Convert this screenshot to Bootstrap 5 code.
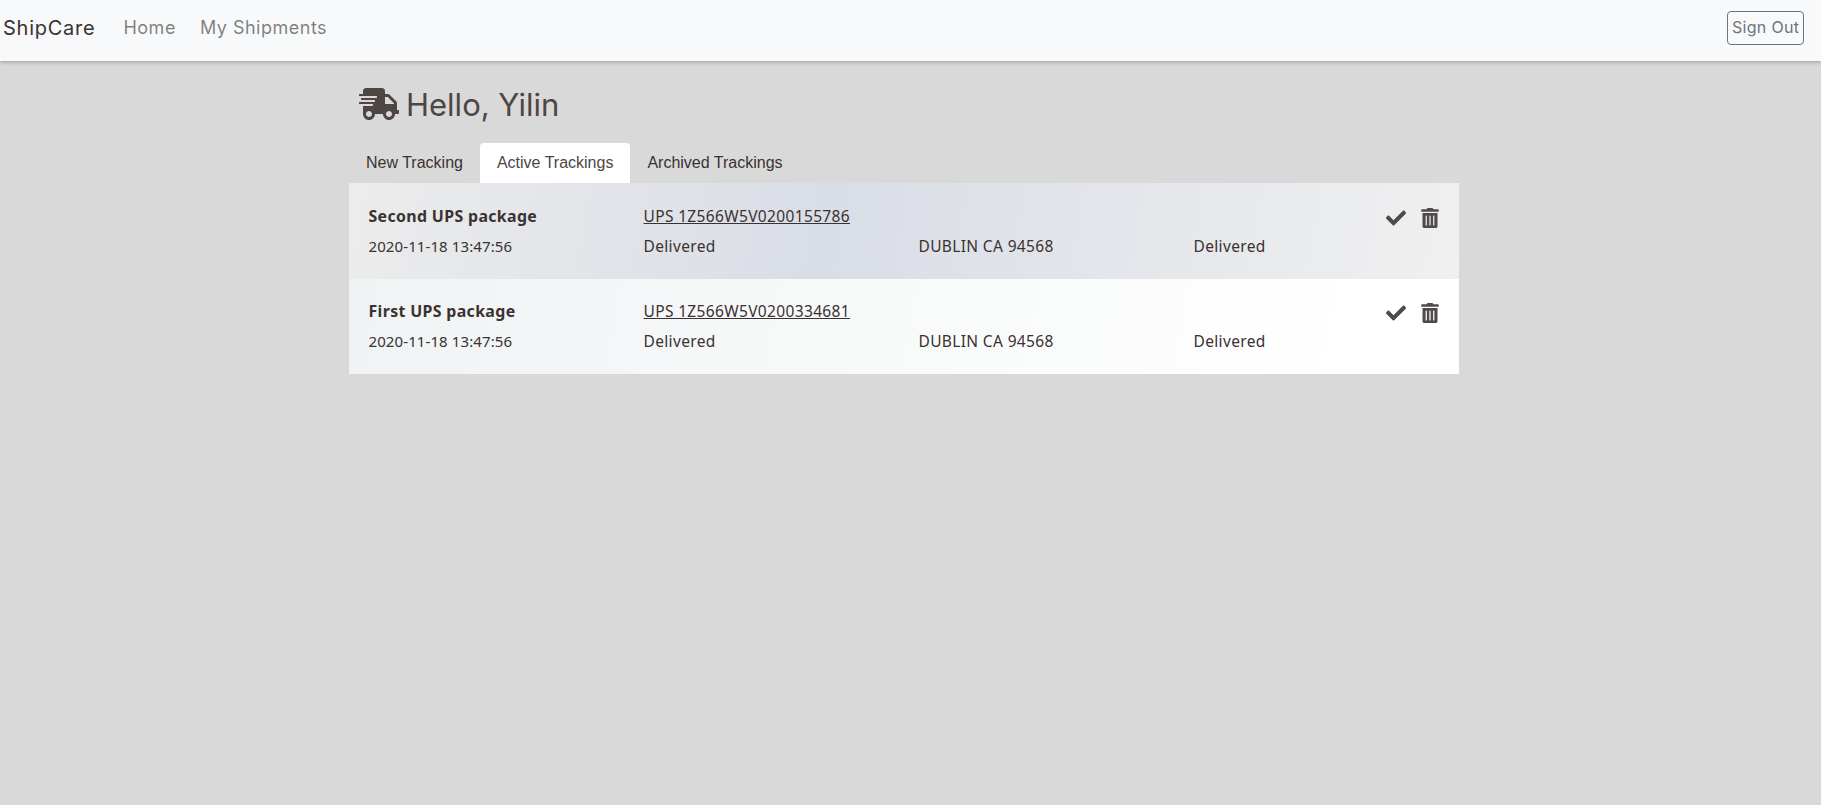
<!DOCTYPE html>
<html lang="en">
<head>
<meta charset="utf-8">
<title>ShipCare</title>
<link href="https://cdn.jsdelivr.net/npm/bootstrap@5.3.0/dist/css/bootstrap.min.css" rel="stylesheet">
<style>
body{background:#d9d9d9;font-family:"Inter","Open Sans",sans-serif;color:#4e4643;min-height:805px;}
.top-bar{height:61px;padding:0 17px 0 3px;box-shadow:0 1px 4px rgba(0,0,0,.3);align-items:center;}
.top-bar .navbar-brand{font-size:20px;letter-spacing:.75px;padding:0;margin-right:28px;color:#3a3230;margin-top:-5px;line-height:28px;}
.navbar-expand .navbar-nav .nav-link{font-size:18px;letter-spacing:.5px;padding:0;margin-right:24px;color:rgba(0,0,0,.5);margin-top:-5px;line-height:28px;}
.signout{font-size:16px;letter-spacing:.3px;padding:0 4px 2px;height:34px;line-height:28px;color:#6c757d;border:1px solid #6c757d;border-radius:4px;margin-top:-6px;width:77px;white-space:nowrap;}
.page-wrap{width:1110px;margin-left:349px;}
.hello{display:flex;align-items:center;gap:7px;margin:27px 0 0 10px;height:32px;font-size:31px;font-weight:400;line-height:32px;color:#4e4643;}
.hello span{position:relative;top:1px;}
.hello svg{width:40px;height:32px;fill:#4e4643;flex:none;}
.tab-strip{border:0;margin-top:23.2px;font-family:"Liberation Sans",Arial,sans-serif;}
.tab-strip .nav-link{padding:8px 17px;height:40px;line-height:24px;font-size:16px;color:#3a3230;border:0;border-radius:4px 4px 0 0;margin:0;}
.tab-strip .nav-link.active{background:#fff;color:#4e4643;}
.track-row{display:flex;height:95.5px;padding:17.4px 20.5px 0 19.5px;font-family:"Noto Sans",sans-serif;font-size:15.5px;letter-spacing:.35px;color:#3a3230;}
.track-a{background:linear-gradient(100deg,#ececec 0%,#d9dde6 43%,#f0f0f0 100%);}
.track-b{background:linear-gradient(100deg,#f0f3f4 0%,#ffffff 90%);}
.track-col{width:275px;flex:none;}
.track-col.last{width:auto;flex:1 1 auto;}
.line-top{height:30px;line-height:30px;display:flex;justify-content:space-between;align-items:flex-start;}
.line-low{height:30px;line-height:30px;}
.track-name{font-weight:700;font-size:15.9px;letter-spacing:.35px;}
.track-date{font-size:15px;letter-spacing:.1px;}
.track-link{color:#3a3230;text-decoration:underline;}
.act-icons{display:flex;gap:15px;margin-top:7.2px;width:100%;justify-content:flex-end;}
.act-icons svg{width:20px;height:20px;fill:#504a4a;}
.act-icons svg.bin{width:18px;}
</style>
</head>
<body>
<nav class="navbar navbar-expand navbar-light bg-light top-bar">
  <a class="navbar-brand" href="#">ShipCare</a>
  <ul class="navbar-nav me-auto">
    <li class="nav-item"><a class="nav-link" href="#">Home</a></li>
    <li class="nav-item"><a class="nav-link" href="#">My Shipments</a></li>
  </ul>
  <button class="btn signout" type="button">Sign Out</button>
</nav>
<main class="page-wrap">
  <h1 class="hello">
    <svg viewBox="0 0 640 512" aria-hidden="true"><path d="M624 352h-16V243.9c0-12.7-5.1-24.9-14.1-33.9L494 110.1c-9-9-21.2-14.1-33.9-14.1H416V48c0-26.5-21.5-48-48-48H112C85.5 0 64 21.5 64 48v48H8c-4.4 0-8 3.6-8 8v16c0 4.4 3.6 8 8 8h272c4.4 0 8 3.6 8 8v16c0 4.4-3.6 8-8 8H40c-4.4 0-8 3.6-8 8v16c0 4.4 3.6 8 8 8h208c4.4 0 8 3.6 8 8v16c0 4.4-3.6 8-8 8H8c-4.4 0-8 3.6-8 8v16c0 4.4 3.6 8 8 8h208c4.4 0 8 3.6 8 8v16c0 4.4-3.6 8-8 8H64v128c0 53 43 96 96 96s96-43 96-96h128c0 53 43 96 96 96s96-43 96-96h48c8.8 0 16-7.2 16-16v-32c0-8.8-7.2-16-16-16zM160 464c-26.5 0-48-21.5-48-48s21.5-48 48-48 48 21.5 48 48-21.5 48-48 48zm320 0c-26.5 0-48-21.5-48-48s21.5-48 48-48 48 21.5 48 48-21.5 48-48 48zm80-208H416V144h44.1l99.9 99.9V256z"/></svg>
    <span>Hello, Yilin</span>
  </h1>
  <ul class="nav nav-tabs tab-strip">
    <li class="nav-item"><a class="nav-link" href="#">New Tracking</a></li>
    <li class="nav-item"><a class="nav-link active" href="#">Active Trackings</a></li>
    <li class="nav-item"><a class="nav-link" href="#">Archived Trackings</a></li>
  </ul>
  <section>
    <div class="track-row track-a">
      <div class="track-col"><div class="line-top track-name">Second UPS package</div><div class="line-low track-date">2020-11-18 13:47:56</div></div>
      <div class="track-col"><div class="line-top"><a class="track-link" href="#">UPS 1Z566W5V0200155786</a></div><div class="line-low">Delivered</div></div>
      <div class="track-col"><div class="line-top"></div><div class="line-low">DUBLIN CA 94568</div></div>
      <div class="track-col last"><div class="line-top"><div class="act-icons">
        <svg viewBox="0 0 512 512" aria-hidden="true"><path d="M173.898 439.404l-166.4-166.4c-9.997-9.997-9.997-26.206 0-36.204l36.203-36.204c9.997-9.998 26.207-9.998 36.204 0L192 312.69 432.095 72.596c9.997-9.997 26.207-9.997 36.204 0l36.203 36.204c9.997 9.997 9.997 26.206 0 36.204l-294.4 294.401c-9.998 9.997-26.207 9.997-36.204-.001z"/></svg>
        <svg class="bin" viewBox="0 0 448 512" aria-hidden="true"><path d="M32 464a48 48 0 0 0 48 48h288a48 48 0 0 0 48-48V128H32zm272-256a16 16 0 0 1 32 0v224a16 16 0 0 1-32 0zm-96 0a16 16 0 0 1 32 0v224a16 16 0 0 1-32 0zm-96 0a16 16 0 0 1 32 0v224a16 16 0 0 1-32 0zM432 32H312l-9.4-18.7A24 24 0 0 0 281.1 0H166.8a23.72 23.72 0 0 0-21.4 13.3L136 32H16A16 16 0 0 0 0 48v32a16 16 0 0 0 16 16h416a16 16 0 0 0 16-16V48a16 16 0 0 0-16-16z"/></svg>
      </div></div><div class="line-low">Delivered</div></div>
    </div>
    <div class="track-row track-b">
      <div class="track-col"><div class="line-top track-name">First UPS package</div><div class="line-low track-date">2020-11-18 13:47:56</div></div>
      <div class="track-col"><div class="line-top"><a class="track-link" href="#">UPS 1Z566W5V0200334681</a></div><div class="line-low">Delivered</div></div>
      <div class="track-col"><div class="line-top"></div><div class="line-low">DUBLIN CA 94568</div></div>
      <div class="track-col last"><div class="line-top"><div class="act-icons">
        <svg viewBox="0 0 512 512" aria-hidden="true"><path d="M173.898 439.404l-166.4-166.4c-9.997-9.997-9.997-26.206 0-36.204l36.203-36.204c9.997-9.998 26.207-9.998 36.204 0L192 312.69 432.095 72.596c9.997-9.997 26.207-9.997 36.204 0l36.203 36.204c9.997 9.997 9.997 26.206 0 36.204l-294.4 294.401c-9.998 9.997-26.207 9.997-36.204-.001z"/></svg>
        <svg class="bin" viewBox="0 0 448 512" aria-hidden="true"><path d="M32 464a48 48 0 0 0 48 48h288a48 48 0 0 0 48-48V128H32zm272-256a16 16 0 0 1 32 0v224a16 16 0 0 1-32 0zm-96 0a16 16 0 0 1 32 0v224a16 16 0 0 1-32 0zm-96 0a16 16 0 0 1 32 0v224a16 16 0 0 1-32 0zM432 32H312l-9.4-18.7A24 24 0 0 0 281.1 0H166.8a23.72 23.72 0 0 0-21.4 13.3L136 32H16A16 16 0 0 0 0 48v32a16 16 0 0 0 16 16h416a16 16 0 0 0 16-16V48a16 16 0 0 0-16-16z"/></svg>
      </div></div><div class="line-low">Delivered</div></div>
    </div>
  </section>
</main>
<script src="https://cdn.jsdelivr.net/npm/bootstrap@5.3.0/dist/js/bootstrap.bundle.min.js"></script>
</body>
</html>
